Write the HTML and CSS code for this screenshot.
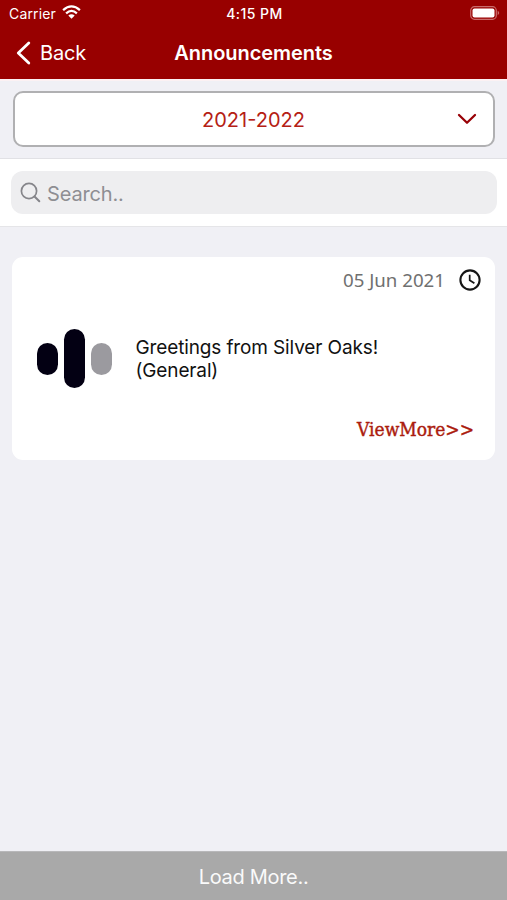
FILE: index.html
```html
<!DOCTYPE html>
<html lang="en">
<head>
<meta charset="utf-8">
<title>Announcements</title>
<link rel="stylesheet" href="styles.css">
</head>
<body>
<header class="header">
  <div class="status">
    <div class="carrier"><span>Carrier</span>
      <svg class="wifi" width="19" height="15" viewBox="0 0 19 15" fill="none" stroke="#fff" stroke-width="2.3"><path d="M1.1 5.1Q9.5-2.3 17.9 5.1M4.1 8.3Q9.5 3.5 14.9 8.3"/><path d="M6.3 10.4Q9.5 7.9 12.7 10.4L9.5 13.8Z" fill="#fff" stroke="none"/></svg>
    </div>
    <time class="time">4:15 PM</time>
    <svg class="battery" width="30" height="14" viewBox="0 0 30 14"><rect x=".7" y=".7" width="25.6" height="12.6" rx="3.8" fill="none" stroke="#c96b6b" stroke-width="1.2"/><rect x="2.5" y="2.5" width="22" height="9" rx="2" fill="#fff"/><path d="M27.7 4.8q3 2.2 0 4.4z" fill="#c96b6b"/></svg>
  </div>
  <nav class="nav">
    <a class="back"><svg width="15" height="24" viewBox="0 0 15 24" fill="none" stroke="#fff" stroke-width="2.8" stroke-linecap="round" stroke-linejoin="round"><path d="M12.8 2 2.3 12 12.8 22"/></svg><span>Back</span></a>
    <h1 class="title">Announcements</h1>
  </nav>
</header>
<section class="year-bar">
  <div class="select"><span class="year">2021-2022</span><svg class="chevron" width="20" height="12" viewBox="0 0 20 12" fill="none" stroke="#980006" stroke-width="2.3" stroke-linecap="round" stroke-linejoin="round"><path d="m2 2 8 7.8L18 2"/></svg></div>
</section>
<section class="search-bar">
  <div class="search"><svg width="22" height="22" viewBox="0 0 22 22" fill="none" stroke="#85858a" stroke-width="1.7" stroke-linecap="round"><circle cx="9" cy="9" r="7.6"/><path d="m14.5 14.5 4.8 4.8" stroke-width="2"/></svg><span>Search..</span></div>
</section>
<main class="list">
  <article class="card">
    <div class="date-row"><time class="date">05 Jun 2021</time><svg width="22" height="22" viewBox="0 0 22 22" fill="none" stroke="#161616" stroke-width="2.1"><circle cx="11" cy="11" r="9.6"/><path d="M10.7 5.7V11.2L15.4 14.3" stroke-width="1.7"/></svg></div>
    <div class="message">
      <div class="logo"><i class="pill"></i><i class="pill tall"></i><i class="pill gray"></i></div>
      <p class="subject"><span>Greetings from Silver Oaks!</span><br><span>(General)</span></p>
    </div>
    <a class="more">ViewMore&gt;&gt;</a>
  </article>
</main>
<footer class="load"><span>Load More..</span></footer>
</body>
</html>
```
FILE: styles.css
```css
* { box-sizing: border-box; }
body { margin: 0; height: 900px; display: flex; flex-direction: column; background: #f0f0f5; font-family: Inter, "Liberation Sans", sans-serif; white-space: nowrap; overflow: hidden; }
svg { display: block; flex: none; }
.header { height: 79px; background: #980000; color: #fff; }
.status { height: 27px; display: grid; grid-template-columns: 1fr auto 1fr; align-items: center; padding: 0 7px 0 9px; }
.carrier { display: flex; align-items: center; gap: 6px; font-size: 14px; letter-spacing: .15px; }
.wifi { margin-top: -2px; }
.time { font-size: 14px; font-weight: 500; letter-spacing: .45px; }
.battery { justify-self: end; margin-top: -1px; }
.nav { height: 51px; display: grid; grid-template-columns: 1fr auto 1fr; align-items: center; padding: 0 16px; }
.back { display: flex; align-items: center; gap: 9px; font-size: 20px; letter-spacing: -.2px; }
.title { margin: 0; font-size: 20px; font-weight: 600; letter-spacing: -.05px; }
.year-bar { height: 80px; padding: 10px 12px 0 13px; border-top: 2px solid #fcf1f3; border-bottom: 1px solid #e1e1e5; }
.select { height: 56px; border: 2px solid #b0b0b2; border-radius: 10px; background: #fff; display: grid; grid-template-columns: 1fr auto 1fr; align-items: center; padding: 0 16px 0 15px; }
.year { grid-column: 2; padding-top: 1px; color: #b52014; font-size: 20px; }
.chevron { justify-self: end; }
.search-bar { height: 68px; padding: 12px 10px 0 11px; background: #fff; border-bottom: 1px solid #e5e5e8; }
.search { height: 43px; border-radius: 12px; background: #eeeef0; display: flex; align-items: center; gap: 5px; padding-left: 9px; color: #8e8e93; font-size: 20px; letter-spacing: -.15px; }
.search span { padding-top: 2px; }
.list { flex: 1; padding: 30px 12px 0; }
.card { height: 203px; background: #fff; border-radius: 11px; display: flex; flex-direction: column; }
.date-row { height: 45px; display: flex; justify-content: flex-end; align-items: center; gap: 14px; padding-right: 14px; }
.date { color: #707070; font-family: "Noto Sans", sans-serif; font-size: 18.7px; }
.message { height: 113px; display: flex; align-items: center; padding-left: 25px; }
.logo { width: 98.5px; display: flex; align-items: center; gap: 6px; }
.pill { width: 21px; height: 32px; background: #030013; border-radius: 11px; }
.tall { height: 59px; }
.gray { background: #9b9a9f; }
.subject { margin: 0; font-size: 19px; line-height: 23px; letter-spacing: -.13px; color: #111; }
.more { align-self: flex-end; margin-right: 21px; color: #ab1c0e; font: 400 19px/29px "DejaVu Serif Condensed", "DejaVu Serif", serif; -webkit-text-stroke: .4px #ab1c0e; }
.load { height: 49px; padding-top: 1px; border-top: 1px solid #b8b8ba; background: #a9a9a9; color: #fafafa; display: flex; align-items: center; justify-content: center; font-size: 20px; letter-spacing: -.3px; }
```
